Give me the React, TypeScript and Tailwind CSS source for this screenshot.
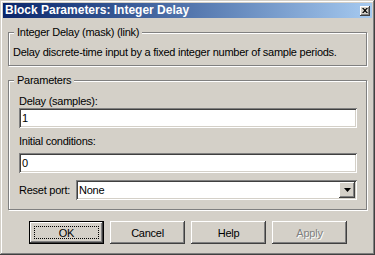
import React from "react";

const sunken =
  "shadow-[inset_1px_1px_#808080,inset_-1px_-1px_#ffffff,inset_2px_2px_#404040,inset_-2px_-2px_#d4d0c8]";
const raised =
  "shadow-[inset_-1px_-1px_#404040,inset_1px_1px_#ffffff,inset_-2px_-2px_#808080,inset_2px_2px_#d4d0c8]";
const etched =
  "border border-[#808080] shadow-[inset_1px_1px_#ffffff,1px_1px_0_#ffffff]";

function Btn({ label, isDefault, disabled }: { label: string; isDefault?: boolean; disabled?: boolean }) {
  return (
    <div
      className={`w-[75px] h-[23px] bg-[#d4d0c8] flex items-center justify-center ${
        isDefault ? "border border-black" : ""
      }`}
    >
      <div className={`w-full h-full flex items-center justify-center ${raised}`}>
        {isDefault ? (
          <div className="w-[65px] h-[13px] border border-dotted border-black flex items-center justify-center">
            <span className="text-[11px] leading-[12px] text-black">{label}</span>
          </div>
        ) : (
          <span
            className={`text-[11px] leading-[12px] ${
              disabled ? "text-[#808080] [text-shadow:1px_1px_0_#ffffff]" : "text-black"
            }`}
          >
            {label}
          </span>
        )}
      </div>
    </div>
  );
}

export default function App() {
  return (
    <div
      className={`w-[375px] h-[255px] bg-[#d4d0c8] p-[3px] flex flex-col font-['Liberation_Sans',Arial,sans-serif] text-black tracking-[-0.25px] shadow-[inset_-1px_-1px_#404040,inset_1px_1px_#d4d0c8,inset_-2px_-2px_#808080,inset_2px_2px_#ffffff]`}
    >
      {/* Title bar */}
      <div className="h-[15px] flex items-center justify-between bg-gradient-to-r from-[#0a246a] to-[#a6caf0] pl-[2px] pr-[2px]">
        <span className="text-white font-bold text-[12px] leading-[15px] tracking-normal">
          Block Parameters: Integer Delay
        </span>
        <div className={`w-[10px] h-[10px] bg-[#d4d0c8] flex items-center justify-center ${raised}`}>
          <svg width="6" height="5" viewBox="0 0 6 5">
            <path d="M0 0h1.5L3 1.6 4.5 0H6L3.8 2.5 6 5H4.5L3 3.4 1.5 5H0l2.2-2.5z" fill="#000" />
          </svg>
        </div>
      </div>

      {/* Frame 1 */}
      <fieldset className={`mt-[7px] mx-[5px] p-0 ${etched}`}>
        <legend className="ml-[5px] px-[3px] bg-[#d4d0c8] text-[11px] leading-[14px]">
          Integer Delay (mask) (link)
        </legend>
        <div className="pt-[6px] pb-[6px] pl-[4px] text-[11px] leading-[14px]">
          Delay discrete-time input by a fixed integer number of sample periods.
        </div>
      </fieldset>

      {/* Frame 2 */}
      <fieldset className={`mt-[7px] mx-[5px] p-0 ${etched}`}>
        <legend className="ml-[5px] px-[3px] bg-[#d4d0c8] text-[11px] leading-[14px]">Parameters</legend>
        <div className="pt-[8px] pb-[9px] pl-[10px] pr-[9px] flex flex-col text-[11px]">
          <div className="leading-[12px]">Delay (samples):</div>
          <div className={`mt-[1px] h-[20px] bg-white flex items-center pl-[3px] leading-[12px] ${sunken}`}>1</div>
          <div className="mt-[7px] leading-[12px]">Initial conditions:</div>
          <div className={`mt-[6px] h-[20px] bg-white flex items-center pl-[3px] leading-[12px] ${sunken}`}>0</div>
          <div className="mt-[7px] flex items-center">
            <div className="w-[57px] leading-[12px]">Reset port:</div>
            <div className={`flex-1 h-[20px] bg-white flex items-center justify-between p-[2px] ${sunken}`}>
              <span className="pl-[1px] leading-[12px]">None</span>
              <div className={`w-[16px] h-[16px] bg-[#d4d0c8] flex items-center justify-center ${raised}`}>
                <svg width="7" height="4" viewBox="0 0 7 4">
                  <path d="M0 0h7L3.5 4z" fill="#000" />
                </svg>
              </div>
            </div>
          </div>
        </div>
      </fieldset>

      {/* Buttons */}
      <div className="mt-[11px] pl-[26px] flex gap-[6px]">
        <Btn label="OK" isDefault />
        <Btn label="Cancel" />
        <Btn label="Help" />
        <Btn label="Apply" disabled />
      </div>
    </div>
  );
}
